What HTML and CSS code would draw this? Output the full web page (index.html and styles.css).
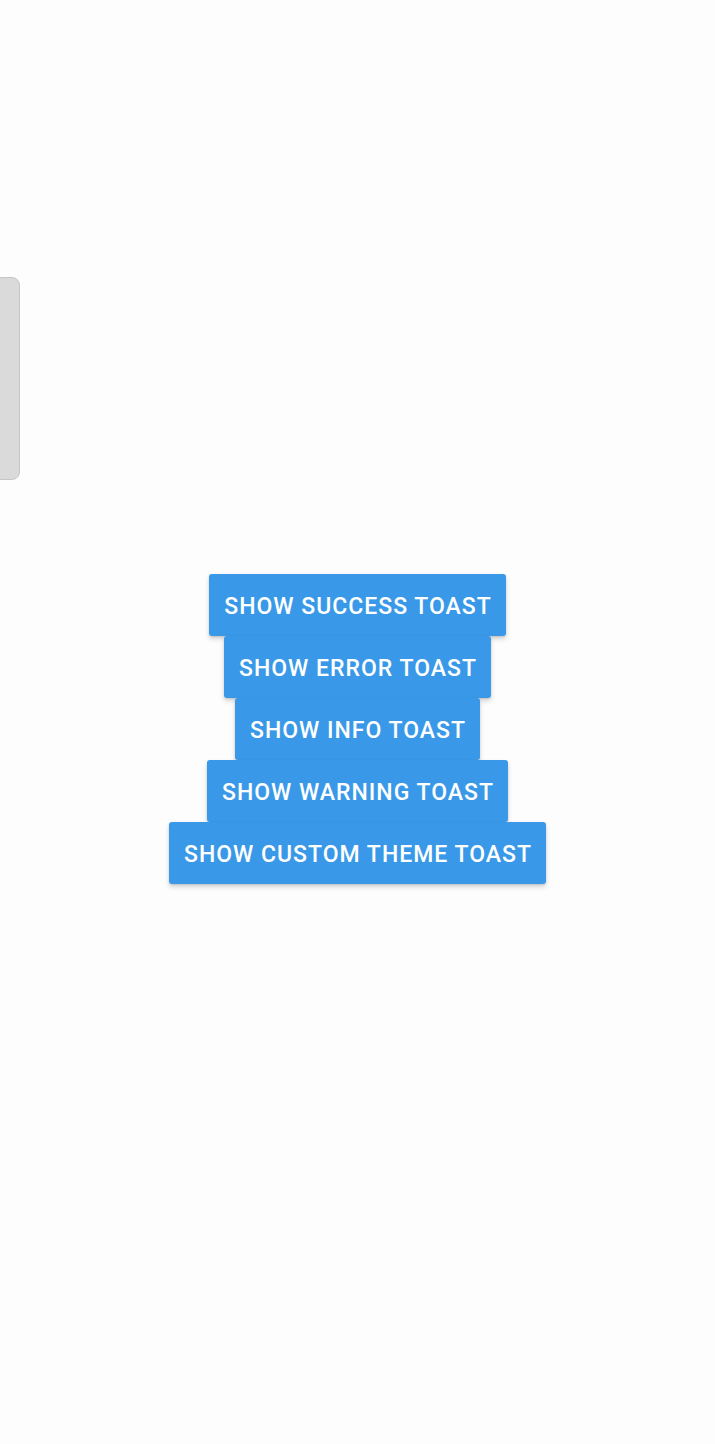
FILE: index.html
```html
<!DOCTYPE html>
<html>
<head>
<meta charset="utf-8">
<link rel="stylesheet" href="styles.css">
</head>
<body>
<div class="handle"></div>
<main class="stack">
  <button class="btn">SHOW SUCCESS TOAST</button>
  <button class="btn">SHOW ERROR TOAST</button>
  <button class="btn">SHOW INFO TOAST</button>
  <button class="btn">SHOW WARNING TOAST</button>
  <button class="btn">SHOW CUSTOM THEME TOAST</button>
</main>
</body>
</html>
```
FILE: styles.css
```css
html, body {
  margin: 0;
  padding: 0;
  background: #fdfdfd;
  width: 715px;
  height: 1444px;
  overflow: hidden;
  font-family: Roboto, "Liberation Sans", sans-serif;
}
.handle {
  position: absolute;
  left: -10px;
  top: 277px;
  width: 28px;
  height: 201px;
  background: #dadada;
  border: 1px solid #c6c6c6;
  border-radius: 8px;
}
.stack {
  display: flex;
  flex-direction: column;
  align-items: center;
  padding-top: 574px;
  gap: 0;
}
.btn {
  height: 62px;
  margin: 0;
  border: none;
  border-radius: 3px;
  padding: 3px 14px 0 15px;
  background: #3999e8;
  color: #ffffff;
  font-family: Roboto, "Liberation Sans", sans-serif;
  font-weight: 500;
  font-size: 23px;
  letter-spacing: 1px;
  box-shadow: 0 3px 5px rgba(0,0,0,0.16), 0 1px 2px rgba(0,0,0,0.1);
}
```
